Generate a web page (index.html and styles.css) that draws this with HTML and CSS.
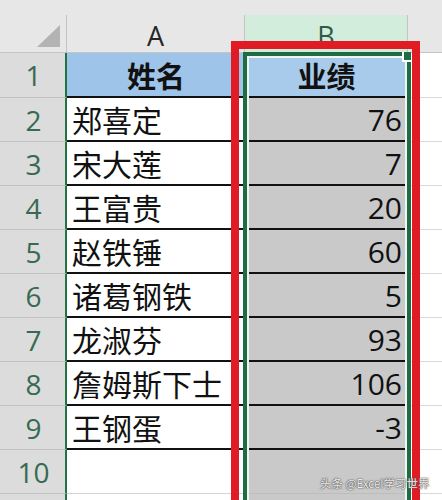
FILE: index.html
```html
<!DOCTYPE html>
<html lang="zh-CN">
<head>
<meta charset="utf-8">
<link rel="stylesheet" href="styles.css">
</head>
<body>
<div class="sheet">
  <div class="strip"></div>

  <div class="corner"><span class="tri"></span></div>
  <div class="colhead">A</div>
  <div class="colhead colhead-sel">B</div>
  <div class="colhead colhead-c"></div>

  <div class="rowhead">1</div>
  <div class="cell a head">姓名</div>
  <div class="cell b head">业绩</div>
  <div class="cell c"></div>

  <div class="rowhead">2</div><div class="cell a">郑喜定</div><div class="cell b">76</div><div class="cell c"></div>
  <div class="rowhead">3</div><div class="cell a">宋大莲</div><div class="cell b">7</div><div class="cell c"></div>
  <div class="rowhead">4</div><div class="cell a">王富贵</div><div class="cell b">20</div><div class="cell c"></div>
  <div class="rowhead">5</div><div class="cell a">赵铁锤</div><div class="cell b">60</div><div class="cell c"></div>
  <div class="rowhead">6</div><div class="cell a">诸葛钢铁</div><div class="cell b">5</div><div class="cell c"></div>
  <div class="rowhead">7</div><div class="cell a">龙淑芬</div><div class="cell b">93</div><div class="cell c"></div>
  <div class="rowhead">8</div><div class="cell a">詹姆斯下士</div><div class="cell b">106</div><div class="cell c"></div>
  <div class="rowhead">9</div><div class="cell a">王钢蛋</div><div class="cell b">-3</div><div class="cell c"></div>
  <div class="rowhead">10</div><div class="cell a empty"></div><div class="cell b empty"></div><div class="cell c"></div>
  <div class="rowhead rowhead-last"></div><div class="cell a last"></div><div class="cell b last"></div><div class="cell c last"></div>

  <div class="sel"><span class="handle"></span></div>
  <div class="mark"></div>
  <div class="watermark">头条 @Excel学习世界</div>
</div>
</body>
</html>
```

FILE: styles.css
```css
* { box-sizing: border-box; }
html, body {
  margin: 0;
  padding: 0;
  width: 442px;
  height: 500px;
  overflow: hidden;
  background: #ffffff;
}
.sheet {
  position: relative;
  display: grid;
  grid-template-columns: 67px 178px 163px 34px;
  grid-template-rows: 15px 38px 45px repeat(9, 44px) 6px;
  height: 500px;
  overflow: hidden;
  font-family: "Noto Sans CJK SC", "Noto Sans", sans-serif;
}
.strip {
  grid-column: 1 / -1;
  background: #e7e7e7;
}
.corner {
  position: relative;
  background: #e7e7e7;
  border-right: 1px solid #c4c4c4;
  border-bottom: 1px solid #c4c4c4;
}
.tri {
  position: absolute;
  left: 37px;
  top: 10px;
  width: 0;
  height: 0;
  border-left: 23px solid transparent;
  border-bottom: 22px solid #b3b3b3;
}
.colhead {
  background: #e7e7e7;
  border-right: 1px solid #c4c4c4;
  border-bottom: 1px solid #c4c4c4;
  display: flex;
  align-items: center;
  justify-content: center;
  font-family: "Open Sans", "Liberation Sans", sans-serif;
  font-size: 27px;
  color: #262626;
  padding-top: 4px;
}
.colhead-sel {
  background: #d3eddc;
  color: #2f5a45;
}
.colhead-c { border-right: none; }

.rowhead {
  background: #dcdcdc;
  border-bottom: 1px solid #c2c2c2;
  border-right: 2px solid #217346;
  display: flex;
  align-items: center;
  justify-content: center;
  font-family: "Open Sans", "Liberation Sans", sans-serif;
  font-size: 28px;
  color: #366a52;
  padding-left: 2px;
}
.rowhead-last { border-bottom: none; }
.cell {
  display: flex;
  align-items: center;
  border-bottom: 2px solid #111;
  font-size: 30px;
  color: #111;
  white-space: nowrap;
  overflow: hidden;
}
.cell.a {
  background: #ffffff;
  padding-left: 5px;
}
.cell.b {
  background: #c9c9c9;
  justify-content: flex-end;
  padding-right: 6px;
  font-family: "Open Sans", "Liberation Sans", sans-serif;
  font-size: 30px;
}
.cell.head {
  background: #9fc4e9;
  justify-content: center;
  font-weight: 700;
  font-family: "Noto Sans CJK SC", sans-serif;
  font-size: 29px;
  padding: 0;
}
.cell.b.head { background: #a8caeb; }
.cell.c {
  background: #ffffff;
  border-bottom: 1px solid #d9d9d9;
}
.cell.empty { border-bottom: 1px solid #d4d4d4; }
.cell.b.empty { border-bottom: 1px solid #bdbdbd; }
.cell.last { border-bottom: none; }

.sel {
  position: absolute;
  left: 243px;
  top: 52px;
  width: 168px;
  height: 448px;
  border: 4px solid #1f6b44;
  border-bottom: none;
  box-shadow: inset 2px 2px 0 0 #eef6f1, inset -2px 0 0 0 #eef6f1;
}
.handle {
  position: absolute;
  right: -4px;
  top: -4px;
  width: 9px;
  height: 10px;
  background: #1f6b44;
  border-left: 2px solid #ffffff;
  border-bottom: 2px solid #ffffff;
}
.mark {
  position: absolute;
  left: 231px;
  top: 41px;
  width: 189px;
  height: 459px;
  border: 8px solid #e11b24;
  border-bottom: none;
}
.watermark {
  position: absolute;
  left: 320px;
  top: 475px;
  font-family: "Noto Sans CJK SC", sans-serif;
  font-size: 11.5px;
  color: rgba(255, 255, 255, 0.9);
  text-shadow: 0 0 1px #555, 0 0 1px #555, 0 0 2px #777;
  white-space: nowrap;
}
```
